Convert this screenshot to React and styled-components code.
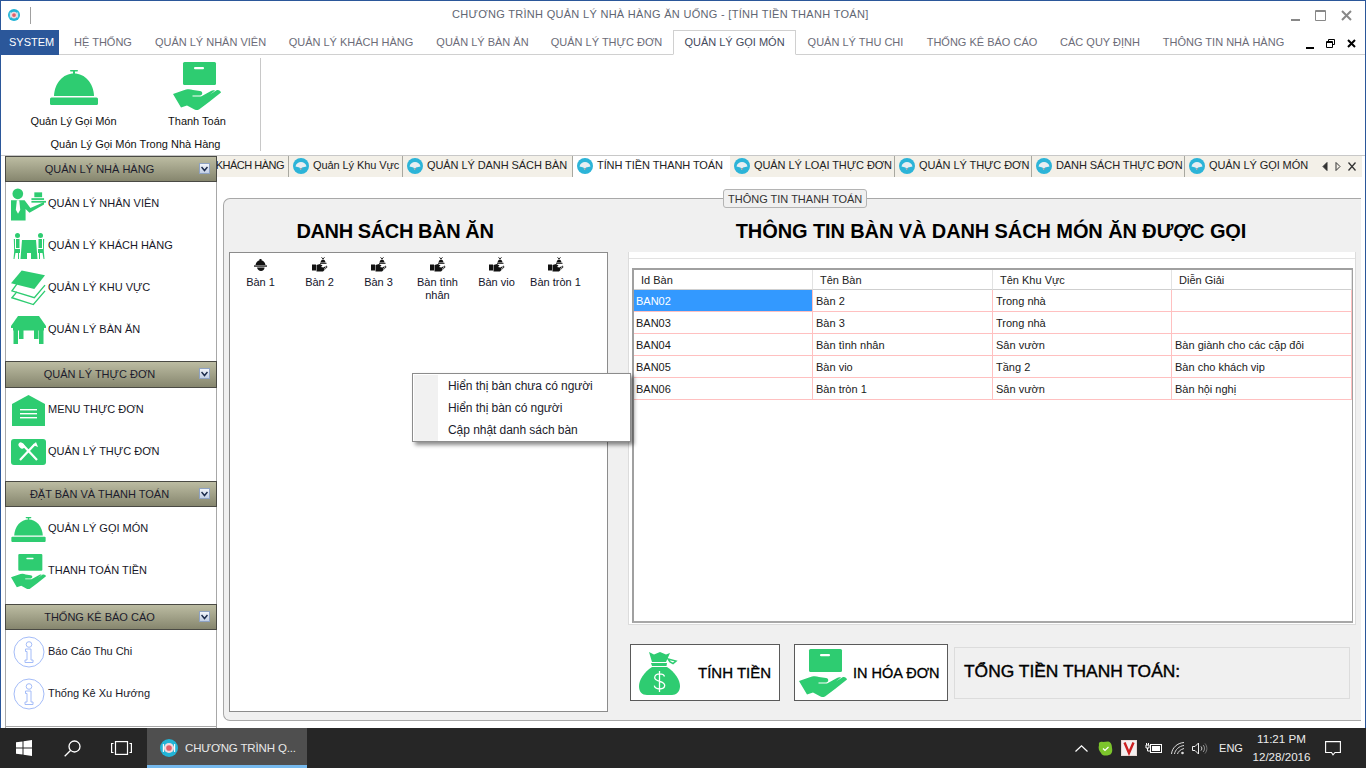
import React from 'react'
import styled, { createGlobalStyle } from 'styled-components'

const GREEN = '#2ecc71'
const FONT = '"Liberation Sans", Arial, sans-serif'

const Global = createGlobalStyle`
    html, body { margin:0; padding:0; background:#fff; overflow:hidden; }
    * { box-sizing:border-box; }
`

const Screen = styled.div`
    width:1366px;
    height:768px;
    display:flex;
    flex-direction:column;
    overflow:hidden;
    background:#fff;
    font-family:${FONT};
    font-size:11px;
    color:#111;
    position:relative;
`
const Window = styled.div`
    flex:1;
    min-height:0;
    display:flex;
    flex-direction:column;
    border-top:1px solid #2b579a;
    border-left:1px solid #2b579a;
    border-right:1px solid #2b579a;
`
const TitleBar = styled.div`
    height:28px;
    display:flex;
    align-items:center;
    padding-left:7px;
    position:relative;
    flex-shrink:0;
`
const TitleSep = styled.div`
    width:1px;
    height:17px;
    background:#a0a0a0;
    margin-left:10px;
`
const TitleText = styled.div`
    position:absolute;
    left:451px;
    top:6px;
    color:#5f6673;
    font-size:11px;
    line-height:14px;
    letter-spacing:.3px;
    white-space:nowrap;
`
const WinControls = styled.div`
    margin-left:auto;
    display:flex;
    align-items:center;
    gap:12px;
    padding-right:12px;
`
const MenuRow = styled.div`
    height:26px;
    display:flex;
    align-items:stretch;
    border-bottom:1px solid #d0d0d0;
    flex-shrink:0;
    position:relative;
`
const SystemButton = styled.div`
    width:58px;
    margin-top:1px;
    margin-bottom:-1px;
    padding:0 0 2px 8px;
    background:#2b579a;
    color:#fff;
    display:flex;
    align-items:center;
`
const MenuTabs = styled.div`
    display:flex;
    align-items:stretch;
    padding-left:3px;
`
const MenuTab = styled.div`
    width:${p => p.$w}px;
    display:flex;
    align-items:center;
    justify-content:center;
    padding-bottom:2px;
    white-space:nowrap;
    color:${p => (p.$active ? '#444a5c' : '#6c6c78')};
    margin-top:1px;
    border:1px solid ${p => (p.$active ? '#d0d0d0' : 'transparent')};
    border-bottom:${p => (p.$active ? '1px solid #fff' : '0')};
    margin-bottom:${p => (p.$active ? '-1px' : '0')};
    background:#fff;
`
const MdiControls = styled.div`
    position:absolute;
    right:9px;
    top:10px;
    display:flex;
    gap:12px;
    align-items:center;
`
const Ribbon = styled.div`
    height:100px;
    display:flex;
    flex-shrink:0;
    padding-top:3px;
`
const RibbonGroup = styled.div`
    width:260px;
    height:93px;
    border-right:1px solid #c8c8c8;
    display:flex;
    flex-direction:column;
    align-items:center;
`
const RibbonButtons = styled.div`
    display:flex;
    width:100%;
    height:73px;
`
const RibbonButton = styled.div`
    width:${p => p.$w}px;
    display:flex;
    flex-direction:column;
    align-items:center;
    padding-top:${p => p.$top}px;
    white-space:nowrap;
`
const RibbonLabel = styled.div`
    margin-top:${p => p.$gap}px;
    line-height:14px;
`
const GroupCaption = styled.div`
    line-height:14px;
    padding-left:10px;
    margin-top:6px;
`
const Workspace = styled.div`
    flex:1;
    min-height:0;
    display:flex;
    border-top:1px solid #c8c8c8;
    padding-left:4px;
`
const Sidebar = styled.div`
    width:212px;
    flex-shrink:0;
    display:flex;
    flex-direction:column;
    border-left:1px solid #a8a8a8;
    border-right:1px solid #a8a8a8;
`
const SideHeader = styled.div`
    height:${p => p.$h || 26}px;
    margin:0 -1px;
    flex-shrink:0;
    border:1px solid #4a4a44;
    background:linear-gradient(#bcbca2, #86866e);
    display:flex;
    align-items:center;
    justify-content:center;
    color:#1c1c2c;
    padding:0 23px 1px 0;
    position:relative;
    white-space:nowrap;
`
const Chevron = styled.div`
    position:absolute;
    right:6px;
    top:6px;
    width:11px;
    height:11px;
    background:linear-gradient(#f2f5fb, #c2cfe4);
    border:1px solid #8ea2c2;
    display:flex;
    align-items:center;
    justify-content:center;
`
const SidePanel = styled.div`
    height:${p => p.$h}px;
    flex-shrink:0;
    padding-top:1px;
`
const SideItem = styled.div`
    height:42px;
    display:flex;
    align-items:center;
    padding-left:5px;
    white-space:nowrap;
    color:#181828;
`
const SideIcon = styled.div`
    width:35px;
    margin-right:2px;
    flex-shrink:0;
    display:flex;
    justify-content:center;
    align-items:center;
`
const SideLabel = styled.span`
    margin-bottom:2px;
`
const SideEnd = styled.div`
    flex:1;
    border-top:1px solid #a8a8a8;
`
const Content = styled.div`
    flex:1;
    min-width:0;
    display:flex;
    flex-direction:column;
`
const DocTabs = styled.div`
    height:21px;
    flex-shrink:0;
    display:flex;
    align-items:center;
    background:#f3f0e8;
    margin-right:3px;
`
const DocTabScroller = styled.div`
    flex:1;
    min-width:0;
    height:100%;
    overflow:hidden;
    display:flex;
    justify-content:flex-end;
`
const DocTab = styled.div`
    flex-shrink:0;
    display:flex;
    align-items:center;
    gap:4px;
    width:${p => p.$w}px;
    height:100%;
    overflow:hidden;
    padding:0 ${p => (p.$clip ? 4 : 0)}px 1px ${p => (p.$clip ? 0 : 4)}px;
    justify-content:${p => (p.$clip ? 'flex-end' : 'flex-start')};
    background:${p => (p.$active ? '#fff' : 'transparent')};
    border-right:1px solid ${p => (p.$active || p.$last ? 'transparent' : '#a8a8a0')};
    white-space:nowrap;
    color:#222;
`
const DocLabel = styled.span`
    margin-bottom:2px;
    letter-spacing:${p => (p.$clip ? -0.5 : -0.08)}px;
`
const DocNav = styled.div`
    width:50px;
    flex-shrink:0;
    display:flex;
    align-items:center;
    gap:7px;
    padding-left:10px;
`
const PaneArea = styled.div`
    flex:1;
    min-height:0;
    padding:21px 5px 7px 6px;
    position:relative;
`
const GroupBox = styled.div`
    height:100%;
    margin-right:-1px;
    background:#f0f0f0;
    border:1px solid #a8a8a8;
    border-right:0;
    border-radius:7px 0 0 7px;
    display:flex;
    padding:0 5px 8px 5px;
    position:relative;
`
const Legend = styled.div`
    position:absolute;
    left:499px;
    top:-10px;
    height:19px;
    padding:0 4px;
    display:flex;
    align-items:center;
    background:#f0f0f0;
    border:1px solid #b4b4b4;
    border-radius:3px;
    color:#333;
    white-space:nowrap;
`
const LeftCol = styled.div`
    width:379px;
    display:flex;
    flex-direction:column;
    flex-shrink:0;
`
const ColTitle = styled.div`
    height:53px;
    padding-top:20px;
    padding-right:${p => p.$shift || 0}px;
    font-size:20px;
    line-height:24px;
    font-weight:700;
    letter-spacing:${p => p.$ls || 0}px;
    text-align:center;
    color:#000;
    white-space:nowrap;
`
const BanList = styled.div`
    flex:1;
    background:#fff;
    border:1px solid #8c8c8c;
    display:flex;
    align-items:flex-start;
    padding:3px 0 0 1px;
`
const BanItem = styled.div`
    width:59px;
    display:flex;
    flex-direction:column;
    align-items:center;
    text-align:center;
    line-height:13px;
    color:#14142a;
`
const BanIcon = styled.div`
    height:17px;
    display:flex;
    align-items:center;
    justify-content:center;
`
const BanLabel = styled.div`
    margin-top:3px;
    width:56px;
`
const RightCol = styled.div`
    flex:1;
    min-width:0;
    margin-left:20px;
    display:flex;
    flex-direction:column;
`
const GridFrame = styled.div`
    height:373px;
    background:#fff;
    border:1px solid #dcdcdc;
    border-top:0;
    padding:16px 0 0 3px;
    box-shadow:inset 0 6px 0 #fff, inset 0 7px 0 #e2e2e2;
`
const Grid = styled.div`
    width:721px;
    height:355px;
    border-top:2px solid #a0a0a0;
    border-left:2px solid #a0a0a0;
    border-right:1px solid #a0a0a0;
    border-bottom:2px solid #a8a8a8;
    display:grid;
    grid-template-columns:179px 180px 179px 180px;
    grid-template-rows:20px repeat(5, 22px);
    align-content:start;
`
const HeadCell = styled.div`
    padding-left:7px;
    display:flex;
    align-items:center;
    border-right:1px solid #e2e2e2;
    border-bottom:1px solid #cfcfcf;
    background:#fff;
    color:#222;
`
const Cell = styled.div`
    padding-left:${p => (p.$first ? 2 : 3)}px;
    display:flex;
    align-items:center;
    white-space:nowrap;
    background:${p => (p.$sel ? '#3399ff' : '#fff')};
    color:${p => (p.$sel ? '#fff' : '#1a1a1a')};
    border-right:1px solid #ffc0c0;
    border-bottom:1px solid #ffc0c0;
`
const BottomRow = styled.div`
    display:flex;
    align-items:center;
    margin-top:19px;
    padding-left:2px;
    height:57px;
`
const ActionButton = styled.div`
    width:${p => p.$w}px;
    height:57px;
    background:#fff;
    border:1px solid #5a5a5a;
    display:flex;
    align-items:center;
    margin-right:${p => p.$mr}px;
    padding-left:${p => p.$pl}px;
    white-space:nowrap;
    color:#000;
`
const ActionText = styled.span`
    margin-left:${p => p.$ml}px;
    font-size:${p => p.$size}px;
    -webkit-text-stroke:.3px #000;
`
const TotalBox = styled.div`
    width:396px;
    height:52px;
    background:#f0f0f0;
    border:1px solid #dcdcdc;
    display:flex;
    align-items:center;
    padding:0 0 3px 9px;
    font-size:17.4px;
    color:#000;
    -webkit-text-stroke:.4px #000;
    white-space:nowrap;
`
const ContextMenu = styled.div`
    position:absolute;
    left:412px;
    top:373px;
    width:219px;
    height:69px;
    background:#fff;
    border:1px solid #8c8c8c;
    box-shadow:3px 3px 4px rgba(0,0,0,.45);
    padding:1px 0 0 1px;
    z-index:5;
    display:flex;
    flex-direction:column;
`
const MenuLine = styled.div`
    height:22px;
    line-height:22px;
    padding-left:34px;
    font-size:12px;
    letter-spacing:-.05px;
    color:#1c1c2c;
    background:linear-gradient(90deg, #f1f1f1 0, #f1f1f1 24px, #fff 24px);
    white-space:nowrap;
`
const Taskbar = styled.div`
    height:40px;
    flex-shrink:0;
    background:#262626;
    display:flex;
    align-items:stretch;
    color:#eee;
`
const TaskSlot = styled.div`
    width:${p => p.$w}px;
    display:flex;
    align-items:center;
    justify-content:center;
    flex-shrink:0;
`
const TaskApp = styled.div`
    width:160px;
    flex-shrink:0;
    background:#4f4f4f;
    border-bottom:3px solid #76b9ed;
    display:flex;
    align-items:center;
    gap:7px;
    padding:3px 0 0 13px;
    font-size:11.5px;
    letter-spacing:-.15px;
    color:#e8e8e8;
    white-space:nowrap;
    svg { flex-shrink:0; }
`
const Tray = styled.div`
    margin-left:auto;
    display:flex;
    align-items:center;
    padding-right:13px;
`
const TrayItem = styled.div`
    width:${p => p.$w}px;
    display:flex;
    align-items:center;
    justify-content:center;
    flex-shrink:0;
`
const Clock = styled.div`
    width:63px;
    text-align:center;
    font-size:11.6px;
    line-height:18px;
    white-space:nowrap;
    color:#ececec;
`

/* ---------- drawings ---------- */
const Bell = ({ w = 48, h = 35 }) => (
    <svg width={w} height={h} viewBox="0 0 48 35">
        <rect x="20" y="0" width="8" height="1.6" rx=".8" fill={GREEN} />
        <rect x="23" y="1" width="2" height="3" fill={GREEN} />
        <path d="M4 26C4.500 13 13 3.500 24 3.500S43.500 13 44 26Z" fill={GREEN} />
        <rect x="0" y="27.500" width="48" height="7.500" rx="1.500" fill={GREEN} />
    </svg>
)
const HandBox = ({ w = 48, h = 48 }) => (
    <svg width={w} height={h} viewBox="0 0 48 48">
        <rect x="10" y="0" width="33" height="23" rx="1.500" fill={GREEN} />
        <rect x="21" y="5" width="10" height="2.200" rx="1" fill="#fff" />
        <path d="M0 32L10 28.500C14 26.800 17 26.800 20 28L27 29C30 29.500 30 33 27 33.500H19.500V34.500H28L38 29C39.500 28 41 28 42 28.500L37 32.500 43.500 28.200C45.500 27.500 47.500 28.500 48 30.500L36 40 26 47.500C24.500 48.300 23 48.300 21.500 47.500L14 43.500 8 45.500Z" fill={GREEN} />
    </svg>
)
const Waiter = () => (
    <svg width="36" height="33" viewBox="0 0 36 33">
        <circle cx="7" cy="5.500" r="5.500" fill={GREEN} />
        <path d="M0 12H14L20 20 34 14V16.500L19 25 15 21V33H0Z" fill={GREEN} />
        <path d="M6 12H8.500L9.500 22 7.200 26 5 22Z" fill="#fff" />
        <rect x="24" y="4" width="8" height="5" fill={GREEN} />
        <rect x="21" y="10" width="13" height="1.800" fill={GREEN} />
        <rect x="21" y="12.800" width="15" height="1.800" fill={GREEN} />
    </svg>
)
const People = () => (
    <svg width="32" height="26" viewBox="0 0 32 26">
        <g fill={GREEN}>
            <circle cx="4.500" cy="2.500" r="2.500" />
            <circle cx="27.500" cy="2.500" r="2.500" />
            <rect x="3" y="6" width="3.500" height="9" />
            <rect x="25.500" y="6" width="3.500" height="9" />
            <path d="M.800 6H2V16H7V20H6V26H5V20H2.500L1.500 26H.500L1.200 18Z" />
            <path d="M31.200 6H30V16H25V20H26V26H27V20H29.500L30.500 26H31.500L30.800 18Z" />
            <path d="M9 7H23L24.500 26H18V20H14V26H7.500Z" />
        </g>
    </svg>
)
const Layers = () => (
    <svg width="36" height="36" viewBox="0 0 36 36">
        <path d="M11 0L35 5 24 19 0 13Z" fill={GREEN} />
        <path d="M6 14L1 21 24 28 35 15" fill="none" stroke={GREEN} strokeWidth="1.400" />
        <path d="M6 22L1 28 23 35 35 21" fill="none" stroke={GREEN} strokeWidth="1.400" />
    </svg>
)
const TableIcon = () => (
    <svg width="35" height="28" viewBox="0 0 35 28">
        <path d="M7 0H28L35 10V12H0V10Z" fill={GREEN} />
        <rect x="2" y="12" width="31" height="2.500" fill={GREEN} />
        <rect x="2.500" y="14" width="4.500" height="14" fill={GREEN} />
        <rect x="28" y="14" width="4.500" height="14" fill={GREEN} />
        <rect x="8" y="14" width="4.500" height="9" fill={GREEN} />
        <rect x="23" y="14" width="4.500" height="9" fill={GREEN} />
    </svg>
)
const MenuHouse = () => (
    <svg width="33" height="31" viewBox="0 0 33 31">
        <path d="M0 9L16.500 0 33 9V31H0Z" fill={GREEN} />
        <rect x="8" y="14" width="17" height="1.400" fill="#fff" />
        <rect x="8" y="18" width="17" height="1.400" fill="#fff" />
        <rect x="8" y="22" width="17" height="1.400" fill="#fff" />
    </svg>
)
const Cutlery = () => (
    <svg width="35" height="26" viewBox="0 0 35 26">
        <rect width="35" height="26" rx="3" fill={GREEN} />
        <path d="M11 5L26 21M24 5L9 21" stroke="#fff" strokeWidth="2.200" />
        <ellipse cx="10.500" cy="6.500" rx="2.500" ry="3.500" transform="rotate(-42 10.500 6.500)" fill="#fff" />
        <path d="M22 6L25 3 27 8Z" fill="#fff" />
    </svg>
)
const InfoIcon = () => (
    <svg width="32" height="32" viewBox="0 0 32 32" fill="none" stroke="#a4bcf8" strokeWidth="1">
        <circle cx="16" cy="16" r="15" />
        <circle cx="16" cy="8.500" r="2.800" />
        <path d="M12.500 13H18V24H20V26.500H12V24H14V15.500H12.500Z" />
    </svg>
)
const MoneyBag = () => (
    <svg width="41" height="44" viewBox="0 0 41 44">
        <path d="M10 1L15 3.500 21 1 27 3.500 31 2 27 11H13Z" fill={GREEN} />
        <path d="M12 12H28L27.500 15H13Z" fill={GREEN} />
        <path d="M29 8L37 10 34 12.500 31 11Z" fill="none" stroke={GREEN} strokeWidth="1.500" />
        <path d="M13 16H28C36 21 41 29 41 35 41 41 37 44 33 44H8C3 44 0 41 0 35 0 29 5 21 13 16Z" fill={GREEN} />
        <path d="M25.500 25.500C25 23.500 23 22.800 20.500 22.800 18 22.800 15.700 24 15.700 26.500 15.700 31.500 25.700 29 25.700 34.300 25.700 37 23 38 20.500 38 18 38 15.800 37 15.300 34.700M20.500 20V41" fill="none" stroke="#fff" strokeWidth="1.300" />
    </svg>
)
const Logo = ({ size = 12 }) => (
    <svg width={size} height={size} viewBox="0 0 16 16">
        <circle cx="8" cy="8" r="8" fill="#22b4d6" />
        <circle cx="8" cy="8" r="4.500" fill="#f0d8dc" />
        <circle cx="8" cy="8" r="2.500" fill="#e0606a" />
        <rect x="2.500" y="4.500" width="1" height="7" fill="#fff" />
        <rect x="12.500" y="4.500" width="1" height="7" fill="#fff" />
    </svg>
)
const TabLogo = () => (
    <svg width="16" height="16" viewBox="0 0 16 16" style={{ flexShrink: 0 }}>
        <circle cx="8" cy="8" r="8" fill="#2cb4d8" />
        <path d="M2.500 8.500C3 5.500 5.500 4 8 4s5 1.500 5.500 4.500L9 9.500 7.500 12 6.500 9.500Z" fill="#e8eef2" />
        <path d="M7 10H9.500L8 12.500Z" fill="#8fa0a8" />
    </svg>
)
const Cloche = () => (
    <svg width="13" height="12" viewBox="0 0 13 12">
        <rect x="5.500" y="0" width="2" height="2" fill="#111" />
        <path d="M1.500 6C2 3 4 1.200 6.500 1.200S11 3 11.500 6Z" fill="#111" />
        <rect x="0" y="6.400" width="13" height="1.300" fill="#111" />
        <path d="M3 8.500H10.500C10.500 10.500 9 12 7 12S3.500 10.500 3 8.500Z" fill="#111" />
    </svg>
)
const HandCloche = () => (
    <svg width="16" height="15" viewBox="0 0 16 15">
        <path d="M0 7.500H4V13.500H0Z" fill="#111" />
        <path d="M4.500 8L8 7 10.500 8.500 9 10 11.500 10.500 14.500 8.500 15.500 10 11 14.500H4.500Z" fill="#111" />
        <path d="M8.500 5.500C8.800 3.500 9.800 2.500 11 2.500S13.300 3.500 13.500 5.500Z" fill="#111" />
        <rect x="8" y="5.800" width="6.500" height="1" fill="#111" />
        <path d="M9.500 .5L11 1.800 12.500 .5" stroke="#111" strokeWidth="1" fill="none" />
        <path d="M13.500 8C14.300 9.800 13.500 11.500 12 12.500" stroke="#fff" strokeWidth=".8" fill="none" />
    </svg>
)
const ChevronGlyph = () => (
    <svg width="7" height="6" viewBox="0 0 7 6">
        <path d="M.5 1L3.500 4.500 6.500 1" fill="none" stroke="#1b2a4a" strokeWidth="1.500" />
    </svg>
)
const Glyph = ({ d, w = 11, h = 11, color = '#888', sw = 2, fill = 'none' }) => (
    <svg width={w} height={h} viewBox={`0 0 ${w} ${h}`}>
        <path d={d} fill={fill} stroke={color} strokeWidth={sw} />
    </svg>
)
const WinLogo = () => (
    <svg width="16" height="16" viewBox="0 0 16 16" fill="#fff">
        <path d="M0 2.300L6.500 1.400V7.500H0ZM7.500 1.200L16 0V7.500H7.500ZM0 8.500H6.500V14.600L0 13.700ZM7.500 8.500H16V16L7.500 14.800Z" />
    </svg>
)
const SearchGlyph = () => (
    <svg width="17" height="17" viewBox="0 0 17 17" fill="none" stroke="#fff" strokeWidth="1.300">
        <circle cx="10.500" cy="6.500" r="5.500" />
        <path d="M6.500 10.500L.700 16.300" />
    </svg>
)
const TaskViewGlyph = () => (
    <svg width="21" height="14" viewBox="0 0 21 14" fill="none" stroke="#fff" strokeWidth="1.200">
        <rect x="4.500" y=".600" width="12" height="12.800" />
        <path d="M2.500 2.500H.600V11.500H2.500M18.500 2.500H20.400V11.500H18.500" />
    </svg>
)
const TrayGlyphs = {
    caret: (
        <svg width="13" height="7" viewBox="0 0 13 7" fill="none" stroke="#fff" strokeWidth="1.200"><path d="M.5 6.500L6.500 .8 12.500 6.500" /></svg>
    ),
    leaf: (
        <svg width="15" height="15" viewBox="0 0 15 15"><path d="M1 4C0 1 3 0 5 1L10 .5C13 1 14 4 14 7 15 11 13 14 11 14 8 15 4 15 3 12 1 10 0 7 1 4Z" fill="#7cc52c" /><path d="M5 7.500L7 9.500 10.500 6" stroke="#fff" strokeWidth="1.200" fill="none" /></svg>
    ),
    v: (
        <svg width="16" height="16" viewBox="0 0 16 16"><rect width="16" height="16" fill="#e8d8d4" /><rect x="1" y="1" width="14" height="14" fill="#f4f0f0" /><path d="M3.500 2.500L8 13 12.500 2.500" fill="none" stroke="#cc2020" strokeWidth="2.400" /></svg>
    ),
    power: (
        <svg width="17" height="12" viewBox="0 0 17 12" fill="none" stroke="#fff"><rect x="5.500" y="2.500" width="11" height="8" /><rect x="7" y="4" width="8" height="5" fill="#fff" stroke="none" /><path d="M1 3H4V6H1ZM2.500 6V9H5M1.500 1V3M3.500 1V3" /></svg>
    ),
    wifi: (
        <svg width="14" height="13" viewBox="0 0 14 13" fill="none" stroke="#ddd" strokeWidth="1"><path d="M.5 12C1 6 6 1 13 .5M3.500 12C4 8 8 4 13 3.500M6.500 12C7 10 9 7.500 13 6.500" /><circle cx="11.500" cy="11" r="1.300" fill="#ddd" stroke="none" /></svg>
    ),
    sound: (
        <svg width="16" height="13" viewBox="0 0 16 13" fill="none" stroke="#eee" strokeWidth="1"><path d="M.5 4.500H3L6.500 1V12L3 8.500H.5Z" /><path d="M9 4.500C10 5.500 10 7.500 9 8.500" /><path d="M11 3C13 5 13 8 11 10" stroke="#aaa" /><path d="M13 1.500C15.500 4.500 15.500 8.500 13 11.500" stroke="#777" /></svg>
    ),
    bubble: (
        <svg width="16" height="15" viewBox="0 0 16 15" fill="none" stroke="#fff" strokeWidth="1.100"><path d="M.6.600H15.400V11.500H10L8 13.800 6.500 11.500H.6Z" /></svg>
    ),
}

/* ---------- data ---------- */
const menuTabs = [
    ['HỆ THỐNG', 82], ['QUẢN LÝ NHÂN VIÊN', 133], ['QUẢN LÝ KHÁCH HÀNG', 148], ['QUẢN LÝ BÀN ĂN', 115],
    ['QUẢN LÝ THỰC ĐƠN', 133], ['QUẢN LÝ GỌI MÓN', 123, true], ['QUẢN LÝ THU CHI', 119], ['THỐNG KÊ BÁO CÁO', 134],
    ['CÁC QUY ĐỊNH', 102], ['THÔNG TIN NHÀ HÀNG', 145],
]
const docTabs = [
    ['KHÁCH HÀNG', 72, false, true], ['Quản Lý Khu Vực', 114], ['QUẢN LÝ DANH SÁCH BÀN', 170],
    ['TÍNH TIỀN THANH TOÁN', 157, true], ['QUẢN LÝ LOẠI THỰC ĐƠN', 165], ['QUẢN LÝ THỰC ĐƠN', 137],
    ['DANH SÁCH THỰC ĐƠN', 153], ['QUẢN LÝ GỌI MÓN', 127],
]
const sideGroups = [
    { title: 'QUẢN LÝ NHÀ HÀNG', h: 179, items: [[<Waiter />, 'QUẢN LÝ NHÂN VIÊN'], [<People />, 'QUẢN LÝ KHÁCH HÀNG'], [<Layers />, 'QUẢN LÝ KHU VỰC'], [<TableIcon />, 'QUẢN LÝ BÀN ĂN']] },
    { title: 'QUẢN LÝ THỰC ĐƠN', h: 93, hh: 27, items: [[<MenuHouse />, 'MENU THỰC ĐƠN'], [<Cutlery />, 'QUẢN LÝ THỰC ĐƠN']] },
    { title: 'ĐẶT BÀN VÀ THANH TOÁN', h: 97, items: [[<Bell w={35} h={25} />, 'QUẢN LÝ GỌI MÓN'], [<HandBox w={35} h={35} />, 'THANH TOÁN TIỀN']] },
    { title: 'THỐNG KÊ BÁO CÁO', h: 96, items: [[<InfoIcon />, 'Báo Cáo Thu Chi'], [<InfoIcon />, 'Thống Kê Xu Hướng']] },
]
const bans = ['Bàn 1', 'Bàn 2', 'Bàn 3', 'Bàn tình nhân', 'Bàn vio', 'Bàn tròn 1']
const columns = ['Id Bàn', 'Tên Bàn', 'Tên Khu Vực', 'Diễn Giải']
const rows = [
    ['BAN02', 'Bàn 2', 'Trong nhà', ''],
    ['BAN03', 'Bàn 3', 'Trong nhà', ''],
    ['BAN04', 'Bàn tình nhân', 'Sân vườn', 'Bàn giành cho các cặp đôi'],
    ['BAN05', 'Bàn vio', 'Tầng 2', 'Bàn cho khách vip'],
    ['BAN06', 'Bàn tròn 1', 'Sân vườn', 'Bàn hội nghị'],
]

const App = () => (
    <Screen>
        <Global />
        <Window>
            <TitleBar>
                <Logo />
                <TitleSep />
                <TitleText>CHƯƠNG TRÌNH QUẢN LÝ NHÀ HÀNG ĂN UỐNG - [TÍNH TIỀN THANH TOÁN]</TitleText>
                <WinControls>
                    <Glyph w={14} h={11} d="M4 10H13" />
                    <Glyph w={14} h={11} sw={1} d="M2.500 .5H12.500V10.500H2.500ZM2.500 1.500H12.500" />
                    <Glyph w={14} h={11} d="M3 1L12 10M12 1L3 10" />
                </WinControls>
            </TitleBar>
            <MenuRow>
                <SystemButton>SYSTEM</SystemButton>
                <MenuTabs>
                    {menuTabs.map(([t, w, a]) => <MenuTab key={t} $w={w} $active={a}>{t}</MenuTab>)}
                </MenuTabs>
                <MdiControls>
                    <Glyph w={8} h={10} color="#000" d="M0 9H8" />
                    <Glyph w={9} h={10} color="#000" sw={1} d="M2.500 2.500V.5H8.500V5.500H6.500M.5 2.500H6.500V8.500H.5ZM.5 3.500H6.500" />
                    <Glyph w={9} h={10} color="#000" d="M1 1L8 8M8 1L1 8" />
                </MdiControls>
            </MenuRow>
            <Ribbon>
                <RibbonGroup>
                    <RibbonButtons>
                        <RibbonButton $w={145} $top={12}>
                            <Bell />
                            <RibbonLabel $gap={9}>Quản Lý Gọi Món</RibbonLabel>
                        </RibbonButton>
                        <RibbonButton $w={102} $top={4}>
                            <HandBox />
                            <RibbonLabel $gap={4}>Thanh Toán</RibbonLabel>
                        </RibbonButton>
                    </RibbonButtons>
                    <GroupCaption>Quản Lý Gọi Món Trong Nhà Hàng</GroupCaption>
                </RibbonGroup>
            </Ribbon>
            <Workspace>
                <Sidebar>
                    {sideGroups.map(g => (
                        <React.Fragment key={g.title}>
                            <SideHeader $h={g.hh}>
                                {g.title}
                                <Chevron><ChevronGlyph /></Chevron>
                            </SideHeader>
                            <SidePanel $h={g.h}>
                                {g.items.map(([icon, label]) => (
                                    <SideItem key={label}>
                                        <SideIcon>{icon}</SideIcon>
                                        <SideLabel>{label}</SideLabel>
                                    </SideItem>
                                ))}
                            </SidePanel>
                        </React.Fragment>
                    ))}
                    <SideEnd />
                </Sidebar>
                <Content>
                    <DocTabs>
                        <DocTabScroller>
                            {docTabs.map(([t, w, a, clip], i) => (
                                <DocTab key={t} $w={w} $active={a} $clip={clip} $last={i === docTabs.length - 1}>
                                    {!clip && <TabLogo />}
                                    <DocLabel $clip={clip}>{t}</DocLabel>
                                </DocTab>
                            ))}
                        </DocTabScroller>
                        <DocNav>
                            <Glyph w={6} h={9} color="#333" sw={1} fill="#333" d="M5 .5V8.500L1 4.500Z" />
                            <Glyph w={6} h={9} color="#333" sw={1} d="M1 .5V8.500L5 4.500Z" />
                            <Glyph w={8} h={9} color="#333" sw={1.300} d="M.5 .5L7.500 8.500M7.500 .5L.5 8.500" />
                        </DocNav>
                    </DocTabs>
                    <PaneArea>
                        <GroupBox>
                            <Legend>THÔNG TIN THANH TOÁN</Legend>
                            <LeftCol>
                                <ColTitle $shift={47} $ls={-0.4}>DANH SÁCH BÀN ĂN</ColTitle>
                                <BanList>
                                    {bans.map((b, i) => (
                                        <BanItem key={b}>
                                            <BanIcon>{i === 0 ? <Cloche /> : <HandCloche />}</BanIcon>
                                            <BanLabel>{b}</BanLabel>
                                        </BanItem>
                                    ))}
                                </BanList>
                            </LeftCol>
                            <RightCol>
                                <ColTitle $ls={-0.1} $shift={2}>THÔNG TIN BÀN VÀ DANH SÁCH MÓN ĂN ĐƯỢC GỌI</ColTitle>
                                <GridFrame>
                                    <Grid>
                                        {columns.map(c => <HeadCell key={c}>{c}</HeadCell>)}
                                        {rows.map((r, i) => r.map((c, j) => (
                                            <Cell key={`${i}-${j}`} $first={j === 0} $sel={i === 0 && j === 0}>{c}</Cell>
                                        )))}
                                    </Grid>
                                </GridFrame>
                                <BottomRow>
                                    <ActionButton $w={150} $mr={14} $pl={8}>
                                        <MoneyBag />
                                        <ActionText $ml={18} $size={15}>TÍNH TIỀN</ActionText>
                                    </ActionButton>
                                    <ActionButton $w={154} $mr={6} $pl={4}>
                                        <HandBox />
                                        <ActionText $ml={6} $size={14.5}>IN HÓA ĐƠN</ActionText>
                                    </ActionButton>
                                    <TotalBox>TỔNG TIỀN THANH TOÁN:</TotalBox>
                                </BottomRow>
                            </RightCol>
                        </GroupBox>
                    </PaneArea>
                </Content>
            </Workspace>
        </Window>
        <ContextMenu>
            <MenuLine>Hiển thị bàn chưa có người</MenuLine>
            <MenuLine>Hiển thị bàn có người</MenuLine>
            <MenuLine>Cập nhật danh sách bàn</MenuLine>
        </ContextMenu>
        <Taskbar>
            <TaskSlot $w={48}><WinLogo /></TaskSlot>
            <TaskSlot $w={48}><SearchGlyph /></TaskSlot>
            <TaskSlot $w={51}><TaskViewGlyph /></TaskSlot>
            <TaskApp>
                <Logo size={18} />
                CHƯƠNG TRÌNH Q...
            </TaskApp>
            <Tray>
                <TrayItem $w={18}>{TrayGlyphs.caret}</TrayItem>
                <TrayItem $w={30}>{TrayGlyphs.leaf}</TrayItem>
                <TrayItem $w={18}>{TrayGlyphs.v}</TrayItem>
                <TrayItem $w={30}>{TrayGlyphs.power}</TrayItem>
                <TrayItem $w={20}>{TrayGlyphs.wifi}</TrayItem>
                <TrayItem $w={24}>{TrayGlyphs.sound}</TrayItem>
                <TrayItem $w={38}>ENG</TrayItem>
                <Clock>11:21 PM<br />12/28/2016</Clock>
                <TrayItem $w={40}>{TrayGlyphs.bubble}</TrayItem>
            </Tray>
        </Taskbar>
    </Screen>
)

export default App
